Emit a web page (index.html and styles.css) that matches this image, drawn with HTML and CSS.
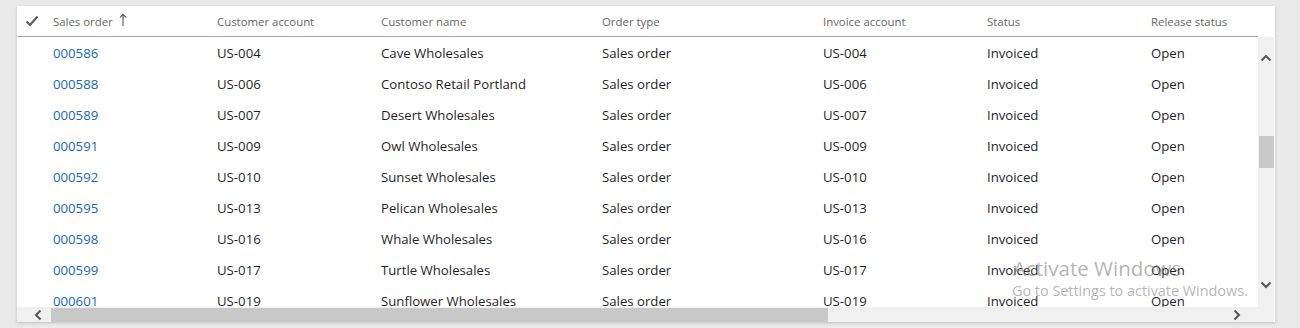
FILE: index.html
```html
<!DOCTYPE html>
<html lang="en">
<head>
<meta charset="utf-8">
<title>Sales orders</title>
<link rel="stylesheet" href="styles.css">
</head>
<body>
<div class="page">
  <div class="card">
    <div class="header">
      <div class="hrow">
        <div class="cell check">
          <svg width="14" height="12" viewBox="0 0 14 12"><path d="M1.5 6.5 L5 10 L12.5 1.5" fill="none" stroke="#5c5c5c" stroke-width="2.2"/></svg>
        </div>
        <div class="cell c1">Sales order <svg class="sort" width="8" height="14" viewBox="0 0 8 14"><path d="M4 13 V1.5 M1 4.5 L4 1.2 L7 4.5" fill="none" stroke="#555" stroke-width="1.1"/></svg></div>
        <div class="cell c2">Customer account</div>
        <div class="cell c3">Customer name</div>
        <div class="cell c4">Order type</div>
        <div class="cell c5">Invoice account</div>
        <div class="cell c6">Status</div>
        <div class="cell c7">Release status</div>
      </div>
    </div>
    <div class="hcorner"></div>
    <div class="body">
      <div class="row"><div class="cell check"></div><div class="cell c1"><a href="#">000586</a></div><div class="cell c2">US-004</div><div class="cell c3">Cave Wholesales</div><div class="cell c4">Sales order</div><div class="cell c5">US-004</div><div class="cell c6">Invoiced</div><div class="cell c7">Open</div></div>
      <div class="row"><div class="cell check"></div><div class="cell c1"><a href="#">000588</a></div><div class="cell c2">US-006</div><div class="cell c3">Contoso Retail Portland</div><div class="cell c4">Sales order</div><div class="cell c5">US-006</div><div class="cell c6">Invoiced</div><div class="cell c7">Open</div></div>
      <div class="row"><div class="cell check"></div><div class="cell c1"><a href="#">000589</a></div><div class="cell c2">US-007</div><div class="cell c3">Desert Wholesales</div><div class="cell c4">Sales order</div><div class="cell c5">US-007</div><div class="cell c6">Invoiced</div><div class="cell c7">Open</div></div>
      <div class="row"><div class="cell check"></div><div class="cell c1"><a href="#">000591</a></div><div class="cell c2">US-009</div><div class="cell c3">Owl Wholesales</div><div class="cell c4">Sales order</div><div class="cell c5">US-009</div><div class="cell c6">Invoiced</div><div class="cell c7">Open</div></div>
      <div class="row"><div class="cell check"></div><div class="cell c1"><a href="#">000592</a></div><div class="cell c2">US-010</div><div class="cell c3">Sunset Wholesales</div><div class="cell c4">Sales order</div><div class="cell c5">US-010</div><div class="cell c6">Invoiced</div><div class="cell c7">Open</div></div>
      <div class="row"><div class="cell check"></div><div class="cell c1"><a href="#">000595</a></div><div class="cell c2">US-013</div><div class="cell c3">Pelican Wholesales</div><div class="cell c4">Sales order</div><div class="cell c5">US-013</div><div class="cell c6">Invoiced</div><div class="cell c7">Open</div></div>
      <div class="row"><div class="cell check"></div><div class="cell c1"><a href="#">000598</a></div><div class="cell c2">US-016</div><div class="cell c3">Whale Wholesales</div><div class="cell c4">Sales order</div><div class="cell c5">US-016</div><div class="cell c6">Invoiced</div><div class="cell c7">Open</div></div>
      <div class="row"><div class="cell check"></div><div class="cell c1"><a href="#">000599</a></div><div class="cell c2">US-017</div><div class="cell c3">Turtle Wholesales</div><div class="cell c4">Sales order</div><div class="cell c5">US-017</div><div class="cell c6">Invoiced</div><div class="cell c7">Open</div></div>
      <div class="row"><div class="cell check"></div><div class="cell c1"><a href="#">000601</a></div><div class="cell c2">US-019</div><div class="cell c3">Sunflower Wholesales</div><div class="cell c4">Sales order</div><div class="cell c5">US-019</div><div class="cell c6">Invoiced</div><div class="cell c7">Open</div></div>
      <div class="watermark">
        <div class="wm1">Activate Windows</div>
        <div class="wm2">Go to Settings to activate Windows.</div>
      </div>
    </div>
    <div class="vscroll">
      <svg class="arrow" width="12" height="8" viewBox="0 0 12 8"><path d="M1.5 6.5 L6 2 L10.5 6.5" fill="none" stroke="#555" stroke-width="2"/></svg>
      <div class="vtrack"><div class="vthumb"></div></div>
      <svg class="arrow" width="12" height="8" viewBox="0 0 12 8"><path d="M1.5 1.5 L6 6 L10.5 1.5" fill="none" stroke="#555" stroke-width="2"/></svg>
    </div>
    <div class="hscroll">
      <svg class="harrow" width="8" height="12" viewBox="0 0 8 12"><path d="M6.5 1.5 L2 6 L6.5 10.5" fill="none" stroke="#555" stroke-width="2"/></svg>
      <div class="htrack"><div class="hthumb"></div></div>
      <svg class="harrow" width="8" height="12" viewBox="0 0 8 12"><path d="M1.5 1.5 L6 6 L1.5 10.5" fill="none" stroke="#555" stroke-width="2"/></svg>
    </div>
    <div class="corner"></div>
  </div>
</div>
</body>
</html>
```

FILE: styles.css
```css
* { box-sizing: border-box; }
html, body { margin: 0; padding: 0; }
body {
  background: #e9e9e9;
  font-family: "Open Sans", "Noto Sans", "Liberation Sans", sans-serif;
  width: 1300px;
  height: 328px;
  overflow: hidden;
}
.page {
  padding: 6px 25px 0 17px;
}
.card {
  width: 1258px;
  height: 316px;
  background: #fff;
  box-shadow: 0 1px 3px rgba(0,0,0,0.18);
  display: grid;
  grid-template-columns: 1241px 17px;
  grid-template-rows: 31px 270px 15px;
}
.header {
  border-bottom: 1px solid #a8a8a8;
}
.hrow, .row {
  display: grid;
  grid-template-columns: 36px 164px 164px 221px 221px 164px 164px 107px;
  align-items: center;
}
.hrow {
  height: 30px;
  font-size: 11.4px;
  color: #666;
}
.hrow .check {
  padding-left: 8px;
  padding-top: 2px;
}
.hrow .c1 {
  display: flex;
  align-items: center;
  gap: 6px;
}
.sort { margin-top: -2px; }
.body {
  position: relative;
  overflow: hidden;
}
.row {
  height: 31px;
  font-size: 13.2px;
  color: #1f1f1f;
}
.cell { white-space: nowrap; }
.row a {
  color: #1766b8;
  text-decoration: none;
}
.vscroll {
  background: #f0f0f0;
  display: flex;
  flex-direction: column;
  align-items: center;
  padding: 17px 0 18px;
  margin-right: 1px;
}
.vtrack {
  flex: 1;
  width: 100%;
  padding-top: 74px;
}
.vthumb {
  width: 15px;
  height: 32px;
  background: #c8c8c8;
  margin-left: 1px;
}
.hscroll {
  background: #f0f0f0;
  display: flex;
  align-items: center;
  padding: 0 17px 0 17px;
}
.harrow { flex: none; }
.htrack {
  flex: 1;
  height: 15px;
  padding-left: 9px;
}
.hthumb {
  width: 777px;
  height: 14px;
  margin-top: 1px;
  background: #c8c8c8;
}
.corner {
  background: #f0f0f0;
  margin-right: 1px;
}
.watermark {
  position: absolute;
  left: 995px;
  top: 218px;
  color: rgba(130,130,130,0.6);
  pointer-events: none;
}
.wm1 {
  font-size: 20.5px;
  line-height: 26px;
  padding-left: 1px;
}
.wm2 {
  font-size: 14.4px;
  line-height: 20px;
}
```
